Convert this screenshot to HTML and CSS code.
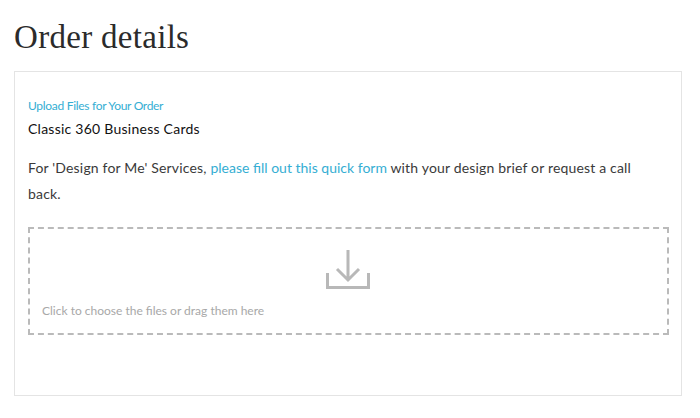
FILE: index.html
```html
<!DOCTYPE html>
<html lang="en">
<head>
<meta charset="utf-8">
<title>Order details</title>
<link rel="stylesheet" href="styles.css">
</head>
<body>
<h1 class="title">Order details</h1>
<section class="card">
  <div class="eyebrow">Upload Files for Your Order</div>
  <div class="product">Classic 360 Business Cards</div>
  <p class="note">For 'Design for Me' Services, <a href="#" class="link">please fill out this quick form</a> with your design brief or request a call back.</p>
  <div class="drop">
    <svg class="drop-icon" width="44" height="39" viewBox="0 0 44 39" aria-hidden="true">
      <path d="M1.5 23V37.5H42.5V23" fill="none" stroke="#b8b8b8" stroke-width="3"/>
      <path d="M22 0V30M11 19L22 30L33 19" fill="none" stroke="#b8b8b8" stroke-width="3"/>
    </svg>
    <div class="drop-text">Click to choose the files or drag them here</div>
  </div>
</section>
</body>
</html>
```
FILE: styles.css
```css
html, body {
  margin: 0;
  padding: 0;
  background: #fff;
}
body {
  width: 700px;
  height: 418px;
  overflow: hidden;
  padding: 0 18px 0 14px;
  box-sizing: border-box;
  font-family: "Lato", "Liberation Sans", sans-serif;
  color: #333;
}
.title {
  margin: 0;
  padding-top: 17px;
  height: 71px;
  box-sizing: border-box;
  font-family: "Liberation Serif", serif;
  font-weight: 400;
  font-size: 33px;
  line-height: 40px;
  letter-spacing: 0.3px;
  color: #2b2b2b;
}
.card {
  height: 325px;
  box-sizing: border-box;
  border: 1px solid #e4e4e4;
  padding: 26px 12px 0 13px;
}
.eyebrow {
  font-size: 12px;
  line-height: 16px;
  letter-spacing: -0.3px;
  color: #35aed3;
}
.product {
  margin-top: 6px;
  font-size: 14px;
  line-height: 18px;
  letter-spacing: 0.25px;
  color: #111;
}
.note {
  margin: 17px 0 0;
  max-width: 615px;
  font-size: 14px;
  line-height: 26px;
  letter-spacing: 0.17px;
  color: #3a3a3a;
}
.link {
  color: #35aed3;
  text-decoration: none;
  letter-spacing: 0;
}
.drop {
  margin-top: 20px;
  height: 108px;
  box-sizing: border-box;
  border: 2px dashed #bababa;
  padding: 21px 13px 0 12px;
  display: flex;
  flex-direction: column;
}
.drop-icon {
  align-self: center;
  display: block;
}
.drop-text {
  margin-top: 13px;
  font-size: 12px;
  line-height: 18px;
  color: #a8a8a8;
}
```
